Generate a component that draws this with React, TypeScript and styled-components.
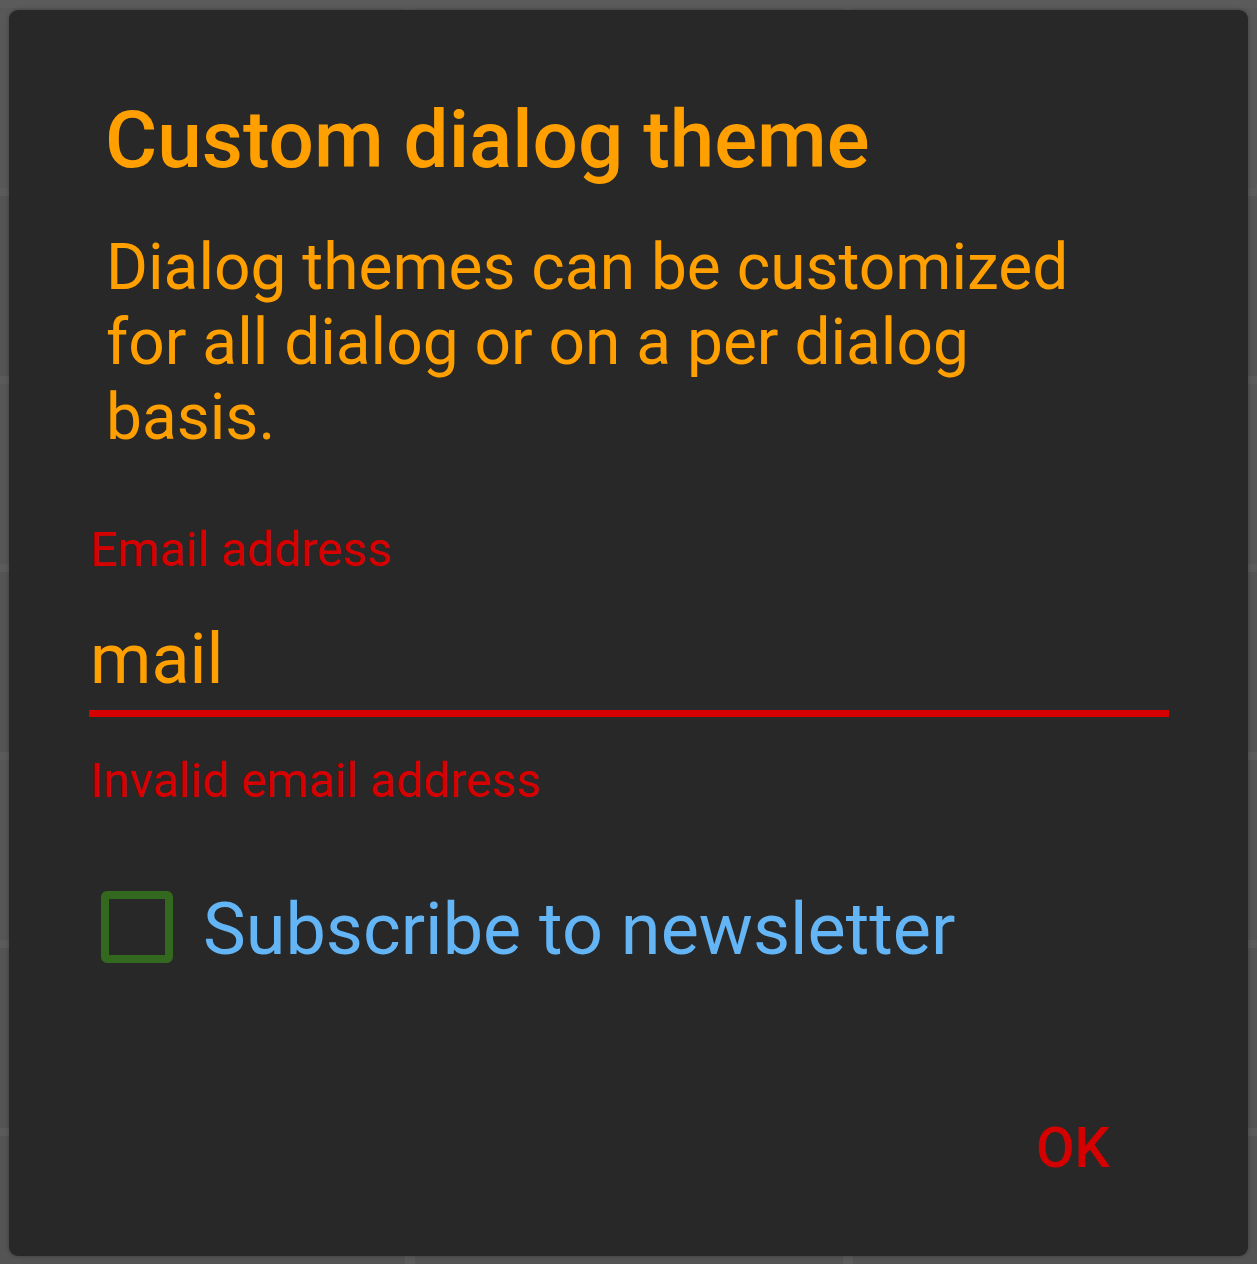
import React from 'react';
import styled, { createGlobalStyle } from 'styled-components';

const GlobalStyle = createGlobalStyle`
	html, body {
		margin: 0;
		padding: 0;
		background: #4f4f4f;
		overflow: hidden;
	}
	#root {
		height: 1264px;
	}
`;

const Screen = styled.div`
	position: relative;
	width: 1257px;
	height: 1264px;
	overflow: hidden;
	font-family: Roboto, 'Noto Sans', sans-serif;
`;

// dimmed app behind the dialog
const Backdrop = styled.div`
	display: grid;
	grid-template-columns: 405px 428px 1fr;
	grid-auto-rows: 180px;
	column-gap: 10px;
	row-gap: 8px;
	background: #5b5b5b;
	height: 100%;
	padding-top: 8px;
	box-sizing: border-box;
`;

const Tile = styled.div<{ $shade?: string }>`
	background: ${(p) => p.$shade || '#545454'};
	display: flex;
	align-items: flex-end;
	padding: 0 0 0 88px;
	overflow: hidden;
`;

const TileText = styled.span`
	font-family: 'Roboto', sans-serif;
	font-weight: 500;
	font-size: 44px;
	letter-spacing: 1px;
	color: #0a0a0a;
	line-height: 1;
	transform: translateY(22px);
`;

const Dialog = styled.div`
	position: absolute;
	top: 10px;
	left: 9px;
	width: 1239px;
	height: 1246px;
	border-radius: 9px;
	background: #282828;
	box-shadow: 0 0 4px rgba(0, 0, 0, 0.3);
	display: flex;
	flex-direction: column;
	box-sizing: border-box;
`;

const Title = styled.h1`
	margin: 82px 0 0 96px;
	font-size: 80px;
	line-height: 96px;
	font-weight: 500;
	color: #ffa000;
`;

const Message = styled.p`
	margin: 42px 170px 0 97px;
	font-size: 64px;
	line-height: 75px;
	font-weight: 400;
	color: #ffa000;
`;

const Field = styled.div`
	margin: 65px 79px 0 80px;
	display: flex;
	flex-direction: column;
`;

const FieldLabel = styled.label`
	font-size: 48px;
	line-height: 60px;
	color: #d50000;
	padding-left: 1px;
`;

const FieldInput = styled.div`
	margin-top: 39px;
	font-size: 70px;
	line-height: 80px;
	color: #ffa000;
	padding: 0 0 11px 1px;
	border-bottom: 7px solid #d50000;
`;

const FieldError = styled.div`
	margin-top: 34px;
	font-size: 48px;
	line-height: 60px;
	color: #d50000;
	padding-left: 1px;
`;

const CheckRow = styled.div`
	margin: 73px 0 0 92px;
	display: flex;
	align-items: center;
	gap: 30px;
`;

const CheckBox = styled.span`
	width: 72px;
	height: 72px;
	box-sizing: border-box;
	border: 8px solid #33691e;
	border-radius: 6px;
`;

const CheckText = styled.span`
	font-size: 72px;
	line-height: 80px;
	color: #64b5f6;
	padding-top: 6px;
`;

const Actions = styled.div`
	margin-top: auto;
	display: flex;
	justify-content: flex-end;
	padding: 0 138px 73px 0;
`;

const ActionButton = styled.button`
	background: none;
	border: none;
	padding: 0;
	font-family: Roboto, sans-serif;
	font-weight: 500;
	font-size: 56px;
	line-height: 70px;
	color: #d50000;
	letter-spacing: 0;
`;

const tiles: { text?: string; shade?: string }[] = [
	{ shade: '#585858' }, { shade: '#575757' }, { shade: '#585858' },
	{}, {}, {},
	{ shade: '#565656' }, {}, { shade: '#565656' },
	{}, {}, {},
	{ shade: '#565656' }, {}, {},
	{}, {}, {},
	{ text: 'NUMBER' }, { text: 'FORM' }, {},
];

export default function App() {
	return (
		<>
			<GlobalStyle />
			<Screen>
				<Backdrop>
					{tiles.map((t, i) => (
						<Tile key={i} $shade={t.shade}>
							{t.text && <TileText>{t.text}</TileText>}
						</Tile>
					))}
				</Backdrop>
				<Dialog>
					<Title>Custom dialog theme</Title>
					<Message>
						Dialog themes can be customized for all dialog or on a per dialog basis.
					</Message>
					<Field>
						<FieldLabel>Email address</FieldLabel>
						<FieldInput>mail</FieldInput>
						<FieldError>Invalid email address</FieldError>
					</Field>
					<CheckRow>
						<CheckBox />
						<CheckText>Subscribe to newsletter</CheckText>
					</CheckRow>
					<Actions>
						<ActionButton>OK</ActionButton>
					</Actions>
				</Dialog>
			</Screen>
		</>
	);
}
